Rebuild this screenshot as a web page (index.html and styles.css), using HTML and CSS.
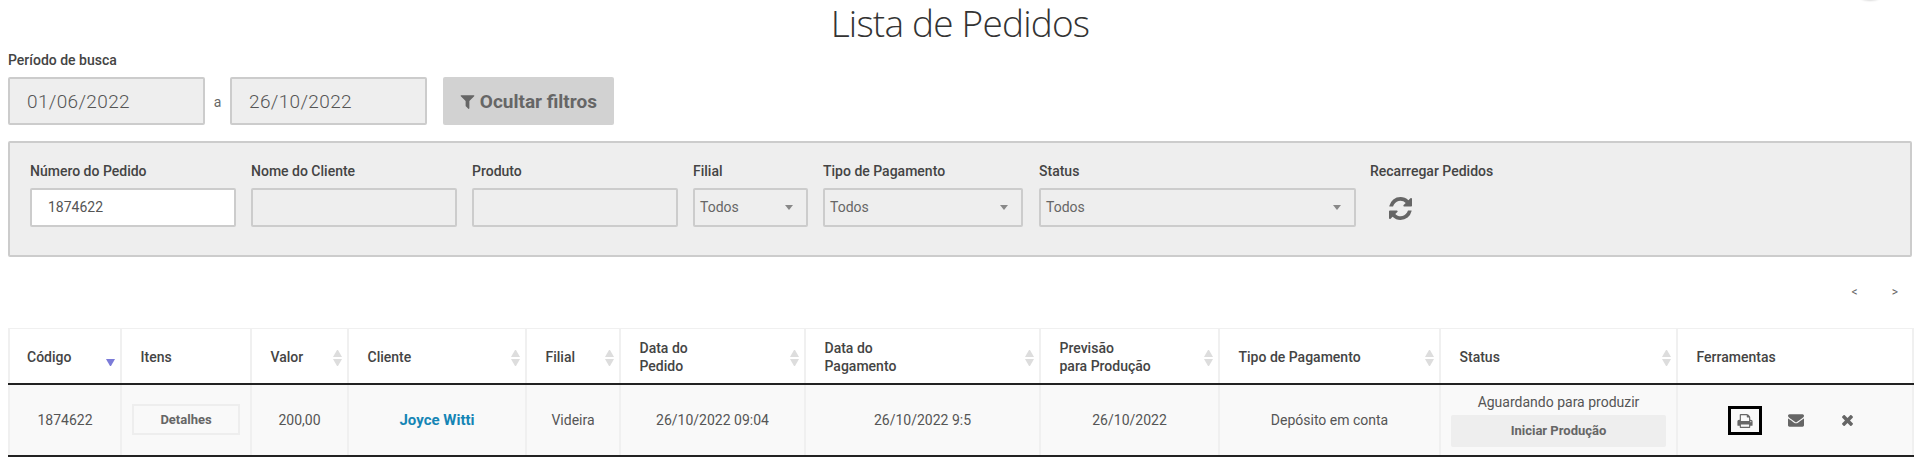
FILE: index.html
```html
<!DOCTYPE html>
<html lang="pt-BR">
<head>
    <meta charset="UTF-8">
    <meta name="viewport" content="width=device-width, initial-scale=1.0">
    <title>Lista de Pedidos</title>
    <link rel="stylesheet" href="styles.css">
</head>
<body>
    <div class="canto-sombra"></div>
    <h1 class="titulo">Lista de Pedidos</h1>

    <label class="rotulo rotulo-periodo">Período de busca</label>
    <div class="periodo">
        <input class="campo campo-data" type="text" value="01/06/2022" disabled>
        <span class="periodo-a">a</span>
        <input class="campo campo-data" type="text" value="26/10/2022" disabled>
        <button class="btn-filtros">
            <svg class="icone-filtro" viewBox="128 256 1536 1408"><path d="M1595 295q17 41-14 70l-493 493v742q0 42-39 59-13 5-25 5-27 0-45-19l-256-256q-19-19-19-45v-486l-493-493q-31-29-14-70 17-39 59-39h1280q42 0 59 39z"/></svg>
            Ocultar filtros
        </button>
    </div>

    <div class="filtros">
        <div class="filtro filtro-texto">
            <label class="rotulo">Número do Pedido</label>
            <input class="campo campo-filtro campo-ativo" type="text" value="1874622">
        </div>
        <div class="filtro filtro-texto">
            <label class="rotulo">Nome do Cliente</label>
            <input class="campo campo-filtro" type="text" disabled>
        </div>
        <div class="filtro filtro-texto">
            <label class="rotulo">Produto</label>
            <input class="campo campo-filtro" type="text" disabled>
        </div>
        <div class="filtro filtro-filial">
            <label class="rotulo">Filial</label>
            <div class="selecao"><span>Todos</span><i class="seta"></i></div>
        </div>
        <div class="filtro filtro-pagamento">
            <label class="rotulo">Tipo de Pagamento</label>
            <div class="selecao"><span>Todos</span><i class="seta"></i></div>
        </div>
        <div class="filtro filtro-status">
            <label class="rotulo">Status</label>
            <div class="selecao"><span>Todos</span><i class="seta"></i></div>
        </div>
        <div class="filtro">
            <label class="rotulo">Recarregar Pedidos</label>
            <svg class="icone-recarregar" viewBox="128 128 1536 1536"><path d="M1639 1056q0 5-1 7-64 268-268 434.5t-478 166.5q-146 0-282.5-55t-243.5-157l-129 129q-19 19-45 19t-45-19-19-45v-448q0-26 19-45t45-19h448q26 0 45 19t19 45-19 45l-137 137q71 66 161 102t187 36q134 0 250-65t186-179q11-17 53-117 8-23 30-23h192q13 0 22.5 9.5t9.5 22.5zm25-800v448q0 26-19 45t-45 19h-448q-26 0-45-19t-19-45 19-45l138-138q-148-137-349-137-134 0-250 65t-186 179q-11 17-53 117-8 23-30 23h-199q-13 0-22.5-9.5t-9.5-22.5v-7q65-268 270-434.5t480-166.5q146 0 284 55.5t245 156.5l130-129q19-19 45-19t45 19 19 45z"/></svg>
        </div>
    </div>

    <div class="paginacao">
        <span>&lt;</span>
        <span>&gt;</span>
    </div>

    <table class="tabela">
        <colgroup>
            <col class="col-codigo">
            <col class="col-itens">
            <col class="col-valor">
            <col class="col-cliente">
            <col class="col-filial">
            <col class="col-data-pedido">
            <col class="col-data-pagamento">
            <col class="col-previsao">
            <col class="col-tipo">
            <col class="col-status">
            <col class="col-ferramentas">
        </colgroup>
        <thead>
            <tr>
                <th><div class="th-conteudo th-primeira">Código<i class="ordem ordem-ativa"></i></div></th>
                <th><div class="th-conteudo">Itens</div></th>
                <th><div class="th-conteudo">Valor<i class="ordem"></i></div></th>
                <th><div class="th-conteudo">Cliente<i class="ordem"></i></div></th>
                <th><div class="th-conteudo">Filial<i class="ordem"></i></div></th>
                <th><div class="th-conteudo"><span>Data do<br>Pedido</span><i class="ordem"></i></div></th>
                <th><div class="th-conteudo"><span>Data do<br>Pagamento</span><i class="ordem"></i></div></th>
                <th><div class="th-conteudo"><span>Previsão<br>para Produção</span><i class="ordem"></i></div></th>
                <th><div class="th-conteudo">Tipo de Pagamento<i class="ordem"></i></div></th>
                <th><div class="th-conteudo">Status<i class="ordem"></i></div></th>
                <th><div class="th-conteudo">Ferramentas</div></th>
            </tr>
        </thead>
        <tbody>
            <tr>
                <td>1874622</td>
                <td><button class="btn-detalhes">Detalhes</button></td>
                <td>200,00</td>
                <td><a class="link-cliente" href="#">Joyce Witti</a></td>
                <td>Videira</td>
                <td>26/10/2022 09:04</td>
                <td>26/10/2022 9:5</td>
                <td>26/10/2022</td>
                <td>Depósito em conta</td>
                <td class="td-status">
                    <div class="status-texto">Aguardando para produzir</div>
                    <button class="btn-producao">Iniciar Produção</button>
                </td>
                <td>
                    <div class="ferramentas">
                        <button class="btn-icone btn-foco"><svg class="icone-imprimir" viewBox="64 128 1664 1536"><path d="M448 1536h896v-256h-896v256zm0-640h896v-384h-160q-40 0-68-28t-28-68v-160h-640v640zm1152 64q0-26-19-45t-45-19-45 19-19 45 19 45 45 19 45-19 19-45zm128 0v416q0 13-9.5 22.5t-22.5 9.5h-224v160q0 40-28 68t-68 28h-960q-40 0-68-28t-28-68v-160h-224q-13 0-22.5-9.5t-9.5-22.5v-416q0-79 56.5-135.5t135.5-56.5h64v-544q0-40 28-68t68-28h672q40 0 88 20t76 48l152 152q28 28 48 76t20 88v256h64q79 0 135.5 56.5t56.5 135.5z"/></svg></button>
                        <button class="btn-icone"><svg class="icone-email" viewBox="0 256 1792 1408"><path d="M1792 710v794q0 66-47 113t-113 47h-1472q-66 0-113-47t-47-113v-794q44 49 101 87 362 246 497 345 57 42 92.5 65.5t94.5 48 110 24.5h2q51 0 110-24.5t94.5-48 92.5-65.5q170-123 498-345 57-39 100-87zm0-294q0 79-49 151t-122 123q-376 261-468 325-10 7-42.5 30.5t-54 38-52 32.5-57.5 27-50 9h-2q-23 0-50-9t-57.5-27-52-32.5-54-38-42.5-30.5q-91-64-262-182.5t-205-142.5q-62-42-117-115.5t-55-136.5q0-78 41.5-130t118.5-52h1472q65 0 112.5 47t47.5 113z"/></svg></button>
                        <button class="btn-icone"><svg class="icone-fechar" viewBox="300 380 1192 1176"><path d="M1490 1322q0 40-28 68l-136 136q-28 28-68 28t-68-28l-294-294-294 294q-28 28-68 28t-68-28l-136-136q-28-28-28-68t28-68l294-294-294-294q-28-28-28-68t28-68l136-136q28-28 68-28t68 28l294 294 294-294q28-28 68-28t68 28l136 136q28 28 28 68t-28 68l-294 294 294 294q28 28 28 68z"/></svg></button>
                    </div>
                </td>
            </tr>
        </tbody>
    </table>
</body>
</html>
```

FILE: styles.css
```css
html, body {
    overflow: hidden;
}
body {
    font-family: Roboto, "Liberation Sans", sans-serif;
    margin: 0;
    padding: 0 8px;
    height: 461px;
    box-sizing: border-box;
    background-color: #ffffff;
    color: #444444;
    font-size: 14px;
}
.canto-sombra {
    position: absolute;
    top: -18px;
    right: 35px;
    width: 30px;
    height: 18px;
    border-radius: 50%;
    box-shadow: 0 1px 2px rgba(0, 0, 0, 0.15);
}
.titulo {
    font-family: "Open Sans", sans-serif;
    font-weight: 300;
    font-size: 37px;
    letter-spacing: -0.8px;
    line-height: 46px;
    height: 46px;
    margin: 0;
    text-align: center;
    color: #333333;
}
.rotulo {
    display: block;
    font-size: 14px;
    font-weight: 500;
    line-height: 18px;
    color: #444444;
}
.rotulo-periodo {
    margin-top: 5px;
    margin-bottom: 8px;
}
.periodo {
    display: flex;
    align-items: center;
    height: 48px;
}
.campo {
    box-sizing: border-box;
    font-family: Roboto, sans-serif;
    border: 2px solid #cccccc;
    border-radius: 2px;
    background-color: #eeeeee;
    color: #555555;
    outline: none;
    margin: 0;
}
.campo-data {
    width: 197px;
    height: 48px;
    font-size: 19px;
    font-weight: 300;
    letter-spacing: 0.35px;
    padding: 0 17px;
    opacity: 1;
}
.periodo-a {
    width: 25px;
    text-align: center;
    font-size: 14px;
    color: #666666;
    margin-top: 2px;
}
.btn-filtros {
    margin-left: 16px;
    width: 171px;
    height: 48px;
    border: none;
    border-radius: 2px;
    background-color: #d2d2d2;
    color: #666666;
    font-family: Roboto, sans-serif;
    font-size: 19px;
    font-weight: 700;
    padding: 0;
}
.icone-filtro {
    width: 15px;
    height: 14px;
    fill: #666666;
    vertical-align: -1px;
}
.filtros {
    box-sizing: border-box;
    display: flex;
    gap: 15px;
    height: 116px;
    margin-top: 16px;
    padding: 19px 20px 0;
    background-color: #eeeeee;
    border: 2px solid #cccccc;
    border-radius: 2px;
}
.filtro .rotulo {
    margin-bottom: 8px;
}
.filtro-texto {
    width: 206px;
}
.filtro-filial {
    width: 115px;
}
.filtro-pagamento {
    width: 200px;
}
.filtro-status {
    width: 317px;
    margin-left: 1px;
}
.filtro-status + .filtro {
    margin-left: -1px;
}
.campo-filtro {
    display: block;
    width: 100%;
    height: 39px;
    font-size: 14px;
    font-weight: 400;
    padding: 0 16px 2px;
}
.campo-ativo {
    background-color: #ffffff;
}
.selecao {
    box-sizing: border-box;
    display: flex;
    align-items: center;
    justify-content: space-between;
    height: 39px;
    padding: 0 13px 2px 5px;
    border: 2px solid #cccccc;
    border-radius: 2px;
    color: #666666;
    font-size: 14px;
}
.seta {
    width: 0;
    height: 0;
    border-left: 4.5px solid transparent;
    border-right: 4.5px solid transparent;
    border-top: 5px solid #888888;
    margin-top: 2px;
}
.icone-recarregar {
    display: block;
    width: 23px;
    height: 23px;
    margin: 17px 0 0 19px;
    fill: #666666;
}
.paginacao {
    display: flex;
    justify-content: flex-end;
    gap: 34px;
    height: 20px;
    margin-top: 25px;
    padding-right: 14px;
    font-size: 12px;
    line-height: 20px;
    color: #666666;
}
.tabela {
    table-layout: fixed;
    width: 1904px;
    margin-top: 26px;
    border-collapse: collapse;
}
.col-codigo { width: 112px; }
.col-itens { width: 130px; }
.col-valor { width: 97px; }
.col-cliente { width: 178px; }
.col-filial { width: 94px; }
.col-data-pedido { width: 185px; }
.col-data-pagamento { width: 235px; }
.col-previsao { width: 179px; }
.col-tipo { width: 221px; }
.col-status { width: 237px; }
.col-ferramentas { width: 236px; }
th {
    box-sizing: border-box;
    height: 55px;
    padding: 2px 0 0;
    border: 2px solid #f0f0f0;
    border-top-width: 1px;
    border-bottom: 2px solid #222222;
    font-size: 14px;
    font-weight: 500;
    line-height: 18px;
    text-align: left;
    color: #444444;
}
.th-conteudo {
    display: flex;
    align-items: center;
    justify-content: space-between;
    padding: 0 5px 0 18.5px;
}
.th-primeira {
    padding-left: 17px;
}
.ordem {
    display: flex;
    flex-direction: column;
    gap: 2px;
    flex: none;
    width: 9px;
    margin-top: 3px;
}
.ordem::before, .ordem::after {
    content: "";
    border-left: 4.5px solid transparent;
    border-right: 4.5px solid transparent;
}
.ordem::before {
    border-bottom: 7px solid #dddddd;
}
.ordem::after {
    border-top: 7px solid #dddddd;
}
.ordem-ativa::before {
    border-bottom-color: transparent;
}
.ordem-ativa::after {
    border-top-color: #7b7bd8;
}
td {
    box-sizing: border-box;
    height: 72px;
    padding: 0;
    background-color: #f9f9f9;
    border-left: 2px solid #f0f0f0;
    border-right: 2px solid #f0f0f0;
    border-bottom: 2px solid #222222;
    font-size: 14px;
    font-weight: 400;
    text-align: center;
    color: #555555;
}
.btn-detalhes {
    width: 108px;
    height: 31px;
    border: 2px solid #eeeeee;
    background: none;
    font-family: Roboto, sans-serif;
    font-size: 13px;
    font-weight: 700;
    color: #666666;
}
.link-cliente {
    color: #1585b5;
    font-weight: 700;
    font-size: 15px;
    text-decoration: none;
}
.td-status {
    padding: 0 10px;
}
.status-texto {
    line-height: 18px;
    margin-bottom: 4px;
}
.btn-producao {
    display: block;
    width: 100%;
    height: 32px;
    border: none;
    border-radius: 2px;
    background-color: #eeeeee;
    font-family: Roboto, sans-serif;
    font-size: 13px;
    font-weight: 700;
    color: #666666;
}
.ferramentas {
    display: flex;
    align-items: center;
    padding: 2px 0 0 50px;
}
.btn-icone {
    box-sizing: border-box;
    display: flex;
    align-items: center;
    justify-content: center;
    width: 34px;
    height: 29px;
    margin-right: 17px;
    padding: 0;
    border: 3px solid transparent;
    background: none;
}
.btn-foco {
    border-color: #000000;
}
.btn-icone svg {
    fill: #666666;
}
.icone-imprimir {
    width: 16px;
    height: 14px;
}
.icone-email {
    width: 16px;
    height: 13px;
}
.icone-fechar {
    width: 11px;
    height: 11px;
}
```
